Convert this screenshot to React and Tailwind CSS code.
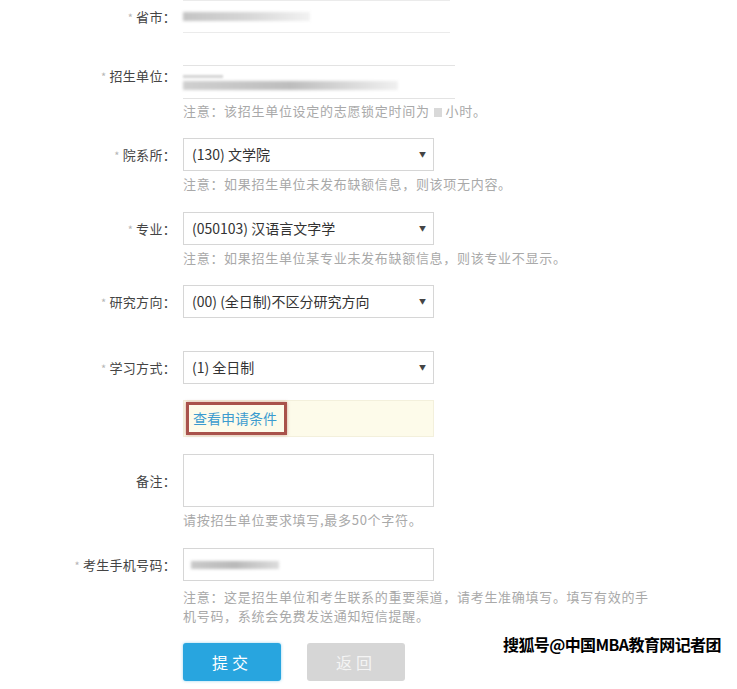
import React from "react";

const font = { fontFamily: '"Noto Sans CJK SC", "Noto Sans", sans-serif' };

function Label({ text, required = true, className = "" }) {
    return (
        <div className={`w-[176px] shrink-0 text-right text-[13px] text-[#444] tracking-[0.3px] ${className}`}>
            {required && <span className="text-[#b5b5b5] text-[11px] mr-[3px]">*</span>}
            {text}：
        </div>
    );
}

function Note({ children, className = "" }) {
    return (
        <div className={`ml-[183px] w-[474px] text-[13px] leading-[18px] tracking-[0.7px] text-[#a9a9a9] ${className}`}>
            {children}
        </div>
    );
}

function Select({ value }) {
    return (
        <div className="ml-[7px] w-[251px] h-[33px] border border-[#d6d6d6] bg-white flex items-center justify-between pl-[8px] pr-[7px] text-[14px] text-[#333]">
            <span>{value}</span>
            <span className="text-[7px] text-[#444]">▼</span>
        </div>
    );
}

export default function App() {
    return (
        <div className="relative w-[737px] h-[689px] bg-white overflow-hidden" style={font}>
            {/* 省市 */}
            <div className="flex items-center h-[33px]">
                <Label text="省市" />
                <div className="ml-[7px] w-[267px] h-[33px] border-t border-b border-[#ebebeb] flex items-center">
                    <div className="w-[127px] h-[9px] bg-gradient-to-r from-[#c4c4c4] via-[#d6d6d6] to-[#f2f2f2] blur-[1.5px]" />
                </div>
            </div>

            {/* 招生单位 */}
            <div className="flex items-start h-[34px] mt-[32px]">
                <Label text="招生单位" className="pt-[1px]" />
                <div className="ml-[7px] w-[272px] h-[34px] border-t border-b border-[#e3e3e3] flex flex-col justify-center gap-[3px]">
                    <div className="w-[40px] h-[3px] bg-[#d4d4d4] blur-[1px]" />
                    <div className="w-[215px] h-[9px] bg-gradient-to-r from-[#cfcfcf] via-[#bdbdbd] to-[#f0f0f0] blur-[1.5px]" />
                </div>
            </div>
            <Note className="mt-[3px]">
                注意：该招生单位设定的志愿锁定时间为
                <span className="inline-block w-[8px] h-[9px] mx-[4px] bg-[#d9d9d9] align-[-1px]" />
                小时。
            </Note>

            {/* 院系所 */}
            <div className="flex items-center mt-[18px]">
                <Label text="院系所" />
                <Select value="(130) 文学院" />
            </div>
            <Note className="mt-[4px]">注意：如果招生单位未发布缺额信息，则该项无内容。</Note>

            {/* 专业 */}
            <div className="flex items-center mt-[19px]">
                <Label text="专业" />
                <Select value="(050103) 汉语言文字学" />
            </div>
            <Note className="mt-[4px]">注意：如果招生单位某专业未发布缺额信息，则该专业不显示。</Note>

            {/* 研究方向 */}
            <div className="flex items-center mt-[18px]">
                <Label text="研究方向" />
                <Select value="(00) (全日制)不区分研究方向" />
            </div>

            {/* 学习方式 */}
            <div className="flex items-center mt-[33px]">
                <Label text="学习方式" />
                <Select value="(1) 全日制" />
            </div>

            {/* 查看申请条件 */}
            <div className="ml-[183px] mt-[16px] w-[251px] h-[37px] bg-[#fdfbea] border border-[#f3f0dc] flex items-center pl-[2px]">
                <div className="h-[33px] w-[101px] border-[3px] border-[#a9524b] shadow-[0_0_3px_rgba(169,82,75,0.5)] flex items-center pl-[4px] text-[14px] text-[#3c9bcf]">
                    查看申请条件
                </div>
            </div>

            {/* 备注 */}
            <div className="flex items-center mt-[17px]">
                <Label text="备注" required={false} />
                <div className="ml-[7px] w-[251px] h-[53px] border border-[#d6d6d6] bg-white" />
            </div>
            <Note className="mt-[4px]">请按招生单位要求填写,最多50个字符。</Note>

            {/* 考生手机号码 */}
            <div className="flex items-center mt-[19px]">
                <Label text="考生手机号码" />
                <div className="ml-[7px] w-[251px] h-[33px] border border-[#d6d6d6] bg-white flex items-center pl-[7px]">
                    <div className="w-[88px] h-[8px] bg-gradient-to-r from-[#c9c9c9] via-[#b9b9b9] to-[#dcdcdc] blur-[1.5px]" />
                </div>
            </div>
            <Note className="mt-[6px] leading-[19px]">
                注意：这是招生单位和考生联系的重要渠道，请考生准确填写。填写有效的手机号码，系统会免费发送通知短信提醒。
            </Note>

            {/* 按钮 */}
            <div className="ml-[183px] mt-[18px] flex gap-[26px]">
                <div className="w-[98px] h-[38px] rounded-[3px] bg-[#28a5df] shadow-[0_0_3px_rgba(40,165,223,0.5)] flex items-center justify-center text-[16px] text-white tracking-[4px]">
                    提交
                </div>
                <div className="w-[98px] h-[38px] rounded-[3px] bg-[#d6d6d6] flex items-center justify-center text-[16px] text-[#f4f4f4] tracking-[4px]">
                    返回
                </div>
            </div>

            {/* 水印 */}
            <div
                className="absolute left-[503px] top-[632px] text-[16px] font-bold text-black tracking-[-0.6px]"
                style={{ textShadow: "1px 1px 0 #fff, -1px -1px 0 #fff, 1px -1px 0 #fff, -1px 1px 0 #fff" }}
            >
                搜狐号@中国MBA教育网记者团
            </div>
        </div>
    );
}
